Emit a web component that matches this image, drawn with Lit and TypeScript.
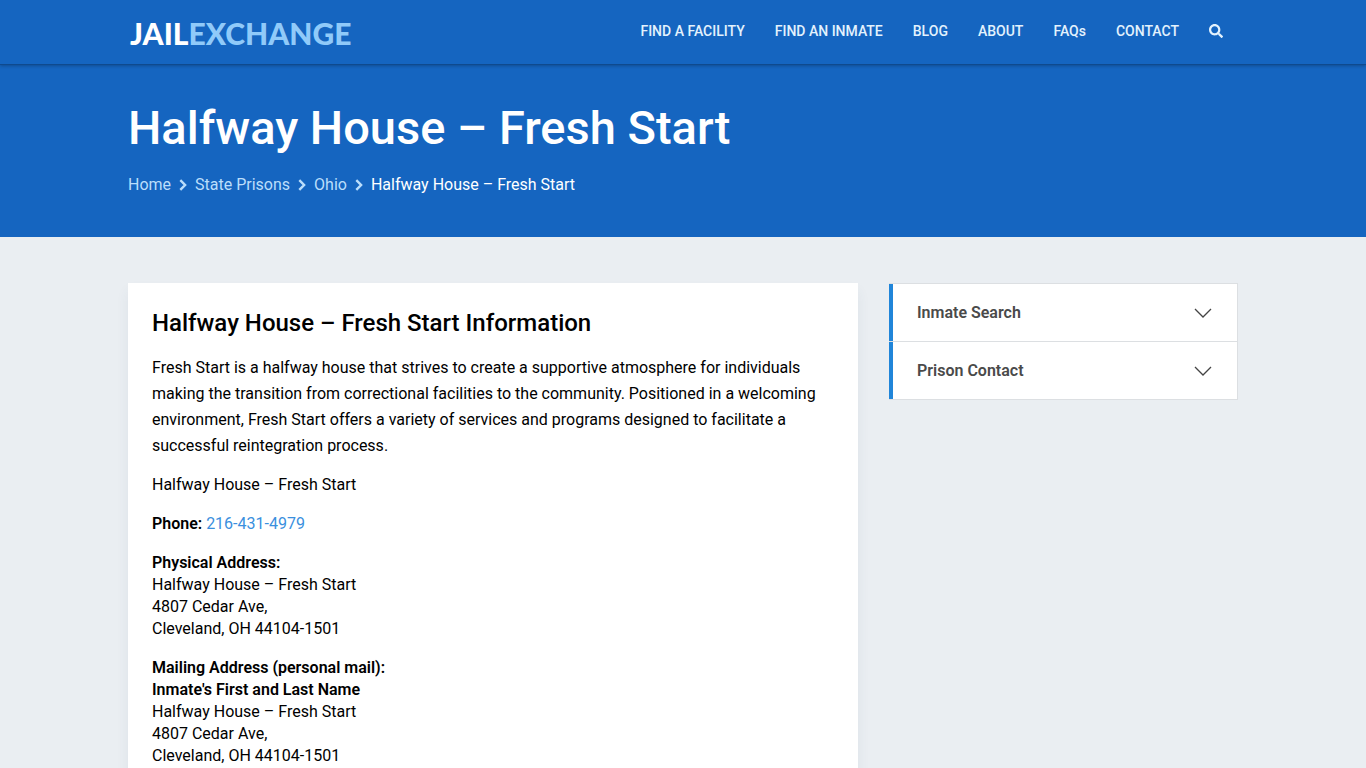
import { LitElement, html, css, svg } from "lit";
import { customElement, property } from "lit/decorators.js";

const NAV = ["FIND A FACILITY", "FIND AN INMATE", "BLOG", "ABOUT", "FAQs", "CONTACT"];
const CRUMBS = ["Home", "State Prisons", "Ohio"];
const NAME = "Halfway House – Fresh Start";

const searchPath = svg`<path d="M505 442.7L405.3 343c-4.500-4.500-10.600-7-17-7H372c27.600-35.300 44-79.700 44-128C416 93.100 322.900 0 208 0S0 93.100 0 208s93.100 208 208 208c48.300 0 92.700-16.400 128-44v16.300c0 6.400 2.500 12.500 7 17l99.700 99.700c9.400 9.400 24.600 9.400 33.900 0l28.300-28.300c9.400-9.400 9.400-24.600.1-34zM208 336c-70.700 0-128-57.200-128-128 0-70.700 57.200-128 128-128 70.700 0 128 57.200 128 128 0 70.700-57.200 128-128 128z" />`;

@customElement("site-header")
export class SiteHeader extends LitElement {
  static styles = css`
    :host {
      display: block;
      position: relative;
      background: #1565c0;
      border-bottom: 1px solid #0f4a8e;
      box-shadow: 0 1px 3px rgba(0, 0, 0, 0.25);
    }
    .bar {
      box-sizing: border-box;
      max-width: 1110px;
      height: 64px;
      margin: 0 auto;
      padding-bottom: 2px;
      display: flex;
      align-items: center;
      justify-content: space-between;
    }
    .logo {
      padding: 4px 0 0 2px;
      color: #fff;
      font: 900 30px/36px Lato, "Open Sans", sans-serif;
      text-decoration: none;
    }
    .light {
      color: #90caf9;
    }
    nav {
      display: flex;
      align-items: center;
    }
    .link {
      padding: 0 15px;
      color: #e3f2fd;
      font-size: 14px;
      line-height: 20px;
      font-weight: 500;
      text-decoration: none;
      white-space: nowrap;
    }
    .search {
      display: flex;
      padding: 0 15px;
      border: 0;
      background: none;
      color: #e3f2fd;
      cursor: pointer;
    }
  `;

  render() {
    return html`<div class="bar">
      <a class="logo" href="#" aria-label="Jail Exchange">JAIL<span class="light">EXCHANGE</span></a>
      <nav aria-label="Main">
        ${NAV.map((t) => html`<a class="link" href="#">${t}</a>`)}
        <button class="search" type="button" aria-label="Search">
          <svg width="14" height="14" viewBox="0 0 512 512" fill="currentColor">${searchPath}</svg>
        </button>
      </nav>
    </div>`;
  }
}

@customElement("page-hero")
export class PageHero extends LitElement {
  static styles = css`
    :host {
      display: block;
      background: #1565c0;
      color: #fff;
    }
    .inner {
      max-width: 1110px;
      margin: 0 auto;
      padding: 34px 0 39px;
    }
    h1 {
      margin: 0;
      font-size: 47px;
      line-height: 58px;
      font-weight: 500;
    }
    ol {
      display: flex;
      align-items: center;
      margin: 15px 0 0;
      padding: 0;
      list-style: none;
      font-size: 16px;
      line-height: 26px;
    }
    li {
      display: flex;
      align-items: center;
    }
    a {
      color: #bbdefb;
      text-decoration: none;
    }
    svg {
      margin: 0 8px;
      color: #bbdefb;
    }
  `;

  render() {
    return html`<div class="inner">
      <h1>${NAME}</h1>
      <nav aria-label="Breadcrumb">
        <ol>
          ${CRUMBS.map(
            (c) => html`<li>
              <a href="#">${c}</a>
              <svg width="8" height="12" viewBox="0 0 8 12" fill="none" stroke="currentColor" stroke-width="2.400">
                <path d="M1.300 1.200L6.100 6L1.300 10.800" />
              </svg>
            </li>`
          )}
          <li aria-current="page">${NAME}</li>
        </ol>
      </nav>
    </div>`;
  }
}

@customElement("side-item")
export class SideItem extends LitElement {
  @property() label = "";

  static styles = css`
    button {
      box-sizing: border-box;
      width: 100%;
      height: 57px;
      display: flex;
      align-items: center;
      justify-content: space-between;
      padding: 0 25px 0 24px;
      border: 0;
      border-left: 4px solid #2085d9;
      background: #fff;
      color: #4a4a4a;
      font: 600 16px/24px Roboto, sans-serif;
      cursor: pointer;
    }
  `;

  render() {
    return html`<button type="button" aria-expanded="false">
      <span>${this.label}</span>
      <svg width="18" height="10" viewBox="0 0 18 10" fill="none" stroke="#444" stroke-width="1.300">
        <path d="M1 1L9 9L17 1" />
      </svg>
    </button>`;
  }
}

@customElement("app-root")
export class AppRoot extends LitElement {
  static styles = css`
    :host {
      display: block;
      min-height: 100vh;
      background: #eaeef2;
      color: #000;
      font-family: Roboto, sans-serif;
      font-size: 16px;
    }
    main {
      max-width: 1110px;
      margin: 0 auto;
      padding: 46px 0;
      display: grid;
      grid-template-columns: minmax(0, 73fr) minmax(0, 35fr);
      column-gap: 30px;
      align-items: start;
    }
    .card {
      padding: 24px;
      background: #fff;
      box-shadow: 0 8px 12px rgba(60, 80, 120, 0.07);
    }
    h2 {
      margin: 0 0 16px;
      font-size: 24px;
      line-height: 32px;
      font-weight: 500;
    }
    p {
      margin: 0 0 17px;
      line-height: 22px;
    }
    .intro {
      margin-bottom: 15px;
      line-height: 26px;
    }
    .phone {
      color: #3a8fde;
      text-decoration: none;
    }
    b {
      font-weight: 600;
    }
    .side {
      margin-left: 1px;
      border: 1px solid #dcdfe2;
      border-left: 0;
    }
    .side side-item {
      display: block;
    }
    .side side-item + side-item {
      border-top: 1px solid #dcdfe2;
    }
  `;

  render() {
    return html`
      <site-header></site-header>
      <page-hero></page-hero>
      <main>
        <article class="card">
          <h2>${NAME} Information</h2>
          <p class="intro">
            Fresh Start is a halfway house that strives to create a supportive atmosphere for individuals making the
            transition from correctional facilities to the community. Positioned in a welcoming environment, Fresh Start
            offers a variety of services and programs designed to facilitate a successful reintegration process.
          </p>
          <p>${NAME}</p>
          <p><b>Phone:</b> <a class="phone" href="tel:216-431-4979">216-431-4979</a></p>
          <p><b>Physical Address:</b><br />${NAME}<br />4807 Cedar Ave,<br />Cleveland, OH 44104-1501</p>
          <p>
            <b>Mailing Address (personal mail):</b><br /><b>Inmate's First and Last Name</b><br />${NAME}<br />4807 Cedar
            Ave,<br />Cleveland, OH 44104-1501
          </p>
        </article>
        <aside class="side">
          <side-item label="Inmate Search"></side-item>
          <side-item label="Prison Contact"></side-item>
        </aside>
      </main>
    `;
  }
}
